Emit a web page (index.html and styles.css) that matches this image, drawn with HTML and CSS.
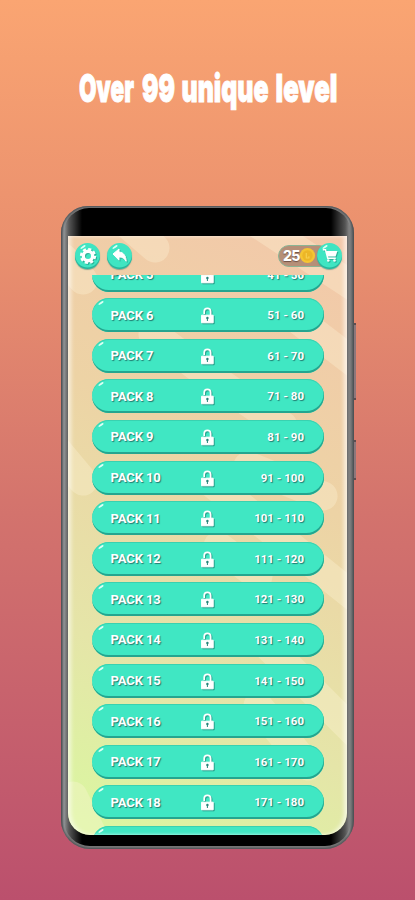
FILE: index.html
```
<!DOCTYPE html>
<html lang="en">
<head>
<meta charset="utf-8">
<title>Over 99 unique level</title>
<link rel="stylesheet" href="styles.css">
</head>
<body>
<svg class="defs" width="0" height="0" aria-hidden="true">
  <symbol id="lock" viewBox="0 0 15 17">
    <path d="M4.2 7V4.6a3.2 3.2 0 0 1 6.4 0V9" fill="none" stroke="#fff" stroke-width="1.7"/>
    <path d="M1.600 8.200h11.600v7.600H1.600z" fill="#fff" stroke="#fff" stroke-linejoin="round"/>
    <circle cx="7.400" cy="11" r="1.200" fill="#25857a"/>
    <path d="M6.900 11h1v3h-1z" fill="#25857a"/>
  </symbol>
</svg>
<svg class="title" width="415" height="60" viewBox="0 0 415 60"><text y="42.300"><tspan x="79" textLength="55" lengthAdjust="spacingAndGlyphs">Over</tspan> <tspan x="142" textLength="33" lengthAdjust="spacingAndGlyphs">99</tspan> <tspan x="181.500" textLength="87" lengthAdjust="spacingAndGlyphs">unique</tspan> <tspan x="275.500" textLength="62" lengthAdjust="spacingAndGlyphs">level</tspan></text></svg>
<main class="phone">
  <i class="key key-volume"></i><i class="key key-power"></i>
  <div class="bezel">
    <section class="screen">
      <svg class="pattern" width="279" height="599" viewBox="0 0 279 599">
        <g stroke="#fff6da" stroke-width="29" stroke-linecap="round" opacity=".32">
          <path d="M52-18L87 12M-5 22L15 44M85 98L155 150M178-20L300 60M225 80L310 145M142 140L215 190M-10 215L15 245M135 240L285 360M180 230L255 260M150 310L190 340M200 410L300 510M190 470L240 530M5 560L25 600"/>
        </g>
      </svg>
      <header class="toolbar">
        <button class="round" aria-label="Settings"><svg width="18" height="18" viewBox="0 0 18 18"><g fill="none" stroke="#fff"><circle cx="9" cy="9" r="4.700" stroke-width="3.400"/><circle cx="9" cy="9" r="6.900" stroke-width="2.400" stroke-dasharray="3.100 2.319"/></g></svg></button>
        <button class="round back" aria-label="Back"><svg width="16" height="15" viewBox="0 0 16 15"><path d="M1 6L7 1v3.100c4.500.2 7 3.500 7.200 9.200C12.300 10.300 10.300 9 7 8.900v3.300z" fill="#fff" stroke="#fff" stroke-linejoin="round"/></svg></button>
        <div class="wallet">
          <span>25</span>
          <svg width="17" height="17" viewBox="0 0 17 17"><circle cx="8.500" cy="8.500" r="7.600" fill="#f5c532"/><circle cx="8.500" cy="8.500" r="5.200" fill="#ecb627"/><path d="M7.300 6v5h2.600V9.300" fill="none" stroke="#f7d04c" stroke-width="1.200"/></svg>
        </div>
        <button class="round cart" aria-label="Shop"><svg width="16" height="15" viewBox="0 0 16 15"><path d="M.8 1.800h2.700L5.800 10.200h8" fill="none" stroke="#fff" stroke-width="1.500"/><path d="M4 3h11.400l-1.800 5.500H5.300z" fill="#fff"/><circle cx="6.300" cy="12.500" r="1.300" fill="#fff"/><circle cx="12.500" cy="12.500" r="1.300" fill="#fff"/></svg></button>
      </header>
      <div class="viewport">
        <ul class="packs">
          <li><b>PACK 5</b><svg><use href="#lock"/></svg><span>41 - 50</span></li>
          <li><b>PACK 6</b><svg><use href="#lock"/></svg><span>51 - 60</span></li>
          <li><b>PACK 7</b><svg><use href="#lock"/></svg><span>61 - 70</span></li>
          <li><b>PACK 8</b><svg><use href="#lock"/></svg><span>71 - 80</span></li>
          <li><b>PACK 9</b><svg><use href="#lock"/></svg><span>81 - 90</span></li>
          <li><b>PACK 10</b><svg><use href="#lock"/></svg><span>91 - 100</span></li>
          <li><b>PACK 11</b><svg><use href="#lock"/></svg><span>101 - 110</span></li>
          <li><b>PACK 12</b><svg><use href="#lock"/></svg><span>111 - 120</span></li>
          <li><b>PACK 13</b><svg><use href="#lock"/></svg><span>121 - 130</span></li>
          <li><b>PACK 14</b><svg><use href="#lock"/></svg><span>131 - 140</span></li>
          <li><b>PACK 15</b><svg><use href="#lock"/></svg><span>141 - 150</span></li>
          <li><b>PACK 16</b><svg><use href="#lock"/></svg><span>151 - 160</span></li>
          <li><b>PACK 17</b><svg><use href="#lock"/></svg><span>161 - 170</span></li>
          <li><b>PACK 18</b><svg><use href="#lock"/></svg><span>171 - 180</span></li>
          <li></li>
        </ul>
      </div>
    </section>
  </div>
</main>
</body>
</html>
```
FILE: styles.css
```
* { box-sizing: border-box; }
body {
  margin: 0;
  height: 900px;
  overflow: hidden;
  padding-top: 60px;
  background: linear-gradient(#faa572 0%, #e98f6e 28%, #d3736d 57%, #bb506d 100%);
  font-family: Roboto, "Liberation Sans", sans-serif;
}
.defs { position: absolute; }
.title { display: block; overflow: visible; }
.title text {
  font: 900 39px Inter, sans-serif;
  fill: #fff;
  stroke: #fff;
  stroke-width: 1px;
}
.phone {
  position: relative;
  width: 293px;
  height: 643px;
  margin: 86px 0 0 61px;
  padding: 2px 3px;
  border-radius: 27px 27px 29px 29px;
  background: linear-gradient(90deg, #56595c 0, #929496 3px, #777 8px, #777 284px, #8f8f8f 288px, #505558 293px);
  box-shadow: inset 0 0 2px 1px #4d5154;
}
.key {
  position: absolute;
  left: 293px;
  width: 2px;
  background: #8d777b;
  border-top: 2px solid #5c4d50;
  border-bottom: 2px solid #5c4d50;
}
.key-volume { top: 117px; height: 77px; }
.key-power { top: 234px; height: 40px; }
.bezel {
  height: 638px;
  padding: 28px 4px 0;
  border-radius: 25px 25px 26px 26px;
  background: linear-gradient(90deg, #0000 0, #000 18px, #000 267px, #0000 287px);
  overflow: hidden;
}
.screen {
  position: relative;
  width: 279px;
  height: 599px;
  overflow: hidden;
  border-radius: 0 0 22px 22px;
  background: linear-gradient(28deg, #d9f8a0 0%, #e5e5a8 28%, #edd3a5 62%, #f3c8aa 100%);
}
.screen::after {
  content: "";
  position: absolute;
  inset: 0;
  border-radius: inherit;
  box-shadow: inset 4px 0 4px -1px #fff9, inset -4px 0 4px -1px #fffa;
  pointer-events: none;
}
.pattern { position: absolute; inset: 0; }
.toolbar {
  position: relative;
  display: flex;
  align-items: center;
  height: 39px;
  padding: 0 5px 0 7px;
}
.round {
  position: relative;
  flex: none;
  display: flex;
  align-items: center;
  justify-content: center;
  width: 25px;
  height: 26px;
  padding: 0;
  border: 0;
  border-radius: 50%;
  background: #3fe5c2;
  box-shadow: inset 0 -1.500px 0 #28b49a, 0 1px 1px #41857b99;
}
.round svg { filter: drop-shadow(1px 1px 0 #239783aa); }
.round::before, .packs li::before {
  content: "";
  position: absolute;
  left: 5px;
  top: 3px;
  width: 6px;
  height: 2px;
  border-radius: 50%;
  background: #dffff5;
  transform: rotate(-32deg);
}
.back { margin-left: 7px; }
.wallet {
  display: flex;
  align-items: center;
  width: 52px;
  height: 22px;
  margin: 0 -13px 0 auto;
  padding-left: 4px;
  border: 1px solid #8ab494;
  border-radius: 11px;
  background: #b68f78;
  color: #fff;
  font: 800 14px Inter, sans-serif;
  letter-spacing: -.6px;
  text-shadow: 0 1px 1px #6d5146;
}
.wallet svg { margin-left: -1px; }
.viewport { position: relative; height: 560px; overflow: hidden; }
.packs {
  display: flex;
  flex-direction: column;
  gap: 6.600px;
  margin: -17.400px 0 0;
  padding: 0 23.500px 0 24px;
  list-style: none;
}
.packs li {
  position: relative;
  flex: none;
  display: grid;
  grid-template-columns: 1fr 15px 1fr;
  align-items: center;
  height: 34px;
  padding: 0 19.500px 0 18.500px;
  border-radius: 17px;
  background: #40e7c3;
  box-shadow: inset -.5px -2px 0 #25a58f, inset 0 1px 0 #39d1b0;
  color: #fff;
  text-shadow: 1px 1px 1px #217a70;
}
.packs li::before { left: 6px; top: 4px; }
.packs b { font-size: 13px; letter-spacing: -.1px; }
.packs span { justify-self: end; font-size: 11.500px; font-weight: 700; }
.packs svg { width: 15px; height: 17px; margin-top: 1px; filter: drop-shadow(1px 1px 0 #26a18c); }
```
